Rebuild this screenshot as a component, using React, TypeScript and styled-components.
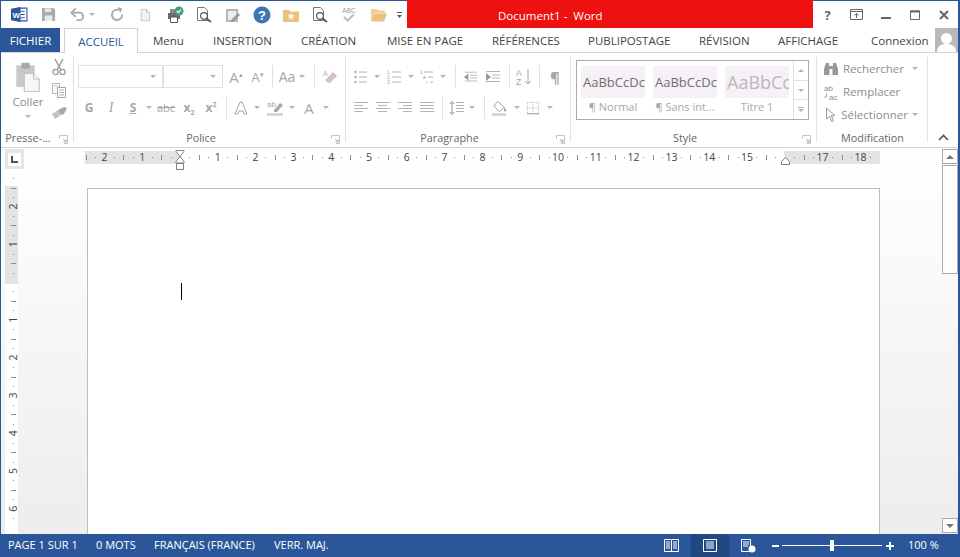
import React from 'react';
import styled, { createGlobalStyle } from 'styled-components';

const BLUE = '#2b579a';
const FAINT = '#b4b4b4';
const MID = '#a6a6a6';

const GlobalStyle = createGlobalStyle`
  html, body { margin: 0; padding: 0; background: #fff; }
  body { font-family: "Open Sans", "Noto Sans", "Liberation Sans", sans-serif; overflow: hidden; }
`;

const Win = styled.div`
  width: 960px;
  height: 557px;
  box-sizing: border-box;
  display: flex;
  flex-direction: column;
  border-left: 1px solid ${BLUE};
  border-right: 2px solid ${BLUE};
  overflow: hidden;
`;

/* title bar */
const TitleBar = styled.div`
  height: 28px;
  display: flex;
  flex: none;
`;
const Qat = styled.div`
  width: 406px;
  box-sizing: border-box;
  display: flex;
  align-items: center;
  padding-left: 6px;
  border-top: 1px solid ${BLUE};
`;
const QatBtn = styled.div<{ $w: number; $start?: boolean }>`
  width: ${(p) => p.$w}px;
  height: 20px;
  flex: none;
  display: flex;
  align-items: center;
  justify-content: ${(p) => (p.$start ? 'flex-start' : 'center')};
`;
const Title = styled.div`
  width: 406px;
  background: #ee1111;
  color: #fff;
  font-size: 11.5px;
  display: flex;
  align-items: center;
  justify-content: flex-start;
  padding-left: 91px;
  padding-top: 3px;
  box-sizing: border-box;
  white-space: pre;
`;
const WinBtns = styled.div`
  flex: 1;
  display: flex;
  align-items: center;
  border-top: 1px solid ${BLUE};
`;
const WinBtn = styled.div`
  width: 29px;
  height: 24px;
  display: flex;
  align-items: center;
  justify-content: center;
  color: #666;
  font-size: 13px;
  font-weight: 700;
`;

/* tabs */
const TabBar = styled.div`
  height: 25px;
  flex: none;
  display: flex;
  align-items: stretch;
  box-sizing: border-box;
  border-bottom: 1px solid #d4d4d4;
  font-size: 11.5px;
  color: #444;
`;
const FileTab = styled.div`
  width: 59px;
  background: ${BLUE};
  color: #fff;
  display: flex;
  align-items: center;
  justify-content: center;
`;
const ActiveTab = styled.div`
  width: 74px;
  margin-left: 4px;
  margin-bottom: -1px;
  background: #fff;
  color: ${BLUE};
  box-sizing: border-box;
  border: 1px solid #d4d4d4;
  border-bottom: none;
  display: flex;
  align-items: center;
  justify-content: center;
`;
const Tab = styled.div<{ $w: number }>`
  width: ${(p) => p.$w}px;
  flex: none;
  display: flex;
  align-items: center;
  white-space: nowrap;
`;
const TabList = styled.div`
  display: flex;
  margin-left: 15px;
`;
const Avatar = styled.div`
  width: 23px;
  margin-left: 7px;
  background: #b9b9b9;
  display: flex;
  align-items: flex-end;
  justify-content: center;
`;

/* ribbon */
const Ribbon = styled.div`
  height: 95px;
  flex: none;
  display: flex;
  box-sizing: border-box;
  border-bottom: 1px solid #d4d4d4;
  padding-bottom: 1px;
`;
const Group = styled.div<{ $w: number }>`
  width: ${(p) => p.$w}px;
  flex: none;
  display: flex;
  flex-direction: column;
  position: relative;
  &::after {
    content: '';
    position: absolute;
    right: 0;
    top: 4px;
    bottom: 4px;
    width: 1px;
    background: #e1e1e1;
  }
`;
const GroupBody = styled.div`
  height: 77px;
  flex: none;
  box-sizing: border-box;
`;
const GroupLabel = styled.div<{ $right?: number }>`
  flex: 1;
  font-size: 10.8px;
  color: #666;
  display: flex;
  align-items: center;
  justify-content: center;
  position: relative;
  box-sizing: border-box;
  padding-right: ${(p) => p.$right ?? 0}px;
  padding-bottom: 2px;
`;
const Launcher = styled.svg`
  position: absolute;
  right: 6px;
  top: 5px;
`;

const ClipBody = styled(GroupBody)`
  display: flex;
  padding: 3px 0 0 7px;
`;
const PasteCol = styled.div`
  width: 40px;
  padding-top: 6px;
  display: flex;
  flex-direction: column;
  align-items: center;
  font-size: 11.5px;
  color: #8c8c8c;
  gap: 2px;
`;
const PasteCaret = styled.div`
  margin-top: 4px;
`;
const ClipTools = styled.div`
  width: 20px;
  margin-left: 1px;
  padding-top: 1px;
  display: flex;
  flex-direction: column;
  gap: 3px;
`;
const Rows = styled(GroupBody)<{ $left: number }>`
  padding: 12px 0 0 ${(p) => p.$left}px;
  display: flex;
  flex-direction: column;
  gap: 8px;
`;
const Row = styled.div<{ $shift?: number }>`
  height: 23px;
  display: flex;
  align-items: center;
  margin-left: ${(p) => p.$shift ?? 0}px;
`;
const Field = styled.div<{ $w: number }>`
  width: ${(p) => p.$w}px;
  height: 23px;
  box-sizing: border-box;
  border: 1px solid #e1e1e1;
  display: flex;
  align-items: center;
  justify-content: flex-end;
  padding-right: 6px;
`;
const Tool = styled.div<{ $w: number }>`
  width: ${(p) => p.$w}px;
  height: 20px;
  flex: none;
  display: flex;
  align-items: center;
  justify-content: center;
  color: ${MID};
  font-size: 12px;
`;
const Glyph = styled.span<{ $bold?: boolean; $italic?: boolean; $under?: boolean; $size?: number; $strike?: boolean }>`
  font-size: ${(p) => p.$size ?? 12}px;
  font-weight: ${(p) => (p.$bold ? 700 : 400)};
  font-style: ${(p) => (p.$italic ? 'italic' : 'normal')};
  text-decoration: ${(p) => (p.$under ? 'underline' : p.$strike ? 'line-through' : 'none')};
  font-family: ${(p) => (p.$italic ? '"Liberation Serif", serif' : 'inherit')};
  sub, sup { font-size: 7px; line-height: 0; }
`;
const Caret = styled.span`
  display: block;
  width: 0;
  height: 0;
  border-left: 3px solid transparent;
  border-right: 3px solid transparent;
  border-top: 3px solid ${FAINT};
`;
const SepSlot = styled.div<{ $w: number }>`
  width: ${(p) => p.$w}px;
  height: 23px;
  flex: none;
  display: flex;
  justify-content: center;
  &::before {
    content: '';
    width: 1px;
    background: #e1e1e1;
  }
`;

/* styles gallery */
const StyleBody = styled(GroupBody)`
  padding: 7px 0 0 5px;
`;
const Gallery = styled.div`
  width: 233px;
  height: 60px;
  box-sizing: border-box;
  border: 1px solid #ababab;
  display: flex;
  padding: 5px 0 0 4px;
  position: relative;
`;
const StyleCell = styled.div`
  width: 64px;
  margin-right: 8px;
  display: flex;
  flex-direction: column;
  align-items: center;
`;
const Swatch = styled.div<{ $title?: boolean }>`
  width: 64px;
  height: 32px;
  background: #f5f1f6;
  overflow: hidden;
  display: flex;
  align-items: center;
  padding-left: 2px;
  box-sizing: border-box;
  white-space: nowrap;
  font-size: ${(p) => (p.$title ? 18 : 13)}px;
  color: ${(p) => (p.$title ? '#b9b9b9' : '#6e6e6e')};
`;
const StyleName = styled.div`
  font-size: 11px;
  color: #a8a8a8;
  margin-top: 1px;
  white-space: nowrap;
`;
const GalleryScroll = styled.div`
  position: absolute;
  right: 0;
  top: 0;
  bottom: 0;
  width: 14px;
  border-left: 1px solid #e1e1e1;
  display: flex;
  flex-direction: column;
`;
const ScrollCell = styled.div`
  flex: 1;
  display: flex;
  flex-direction: column;
  gap: 1px;
  align-items: center;
  justify-content: center;
  & + & { border-top: 1px solid #e1e1e1; }
`;
const CaretUp = styled(Caret)`
  border-top: none;
  border-bottom: 3px solid ${FAINT};
`;
const Bar = styled.span`
  display: block;
  width: 6px;
  height: 1px;
  background: ${FAINT};
`;

/* modification */
const FindBody = styled(GroupBody)`
  padding: 4px 0 0 6px;
  display: flex;
  flex-direction: column;
`;
const FindRow = styled.div`
  height: 23px;
  width: 95px;
  display: flex;
  align-items: center;
  gap: 4px;
  font-size: 11.5px;
  color: #8e8e8e;
`;
const FindIcon = styled.div`
  width: 16px;
  display: flex;
  justify-content: center;
`;
const FindCaret = styled(Caret)`
  margin-left: auto;
`;
const Collapse = styled.div`
  flex: 1;
  display: flex;
  align-items: flex-end;
  justify-content: center;
  padding: 0 0 5px 0;
`;

/* workspace */
const Workspace = styled.div`
  flex: 1;
  min-height: 0;
  display: flex;
  background: linear-gradient(#ffffff, #ededed);
`;
const DocPane = styled.div`
  flex: 1;
  min-width: 0;
  display: flex;
  flex-direction: column;
`;
const RulerRow = styled.div`
  height: 22px;
  flex: none;
  display: flex;
  align-items: stretch;
  padding-left: 4px;
`;
const TabStop = styled.div`
  width: 19px;
  margin: 1px 0;
  background: #e6e6e6;
  display: flex;
  align-items: center;
  justify-content: center;
`;
const TabStopInner = styled.div`
  width: 13px;
  height: 13px;
  background: #fff;
  display: flex;
  align-items: center;
  justify-content: center;
`;
const HRuler = styled.svg`
  margin-left: 61px;
  display: block;
`;
const DocRow = styled.div`
  flex: 1;
  min-height: 0;
  display: flex;
  padding-left: 4px;
`;
const VRuler = styled.svg`
  margin-top: 16px;
  display: block;
  flex: none;
  overflow: visible;
`;
const Page = styled.div`
  width: 793px;
  margin: 18px 0 0 69px;
  box-sizing: border-box;
  background: #fff;
  border: 1px solid #bdbdbd;
  border-bottom: none;
  padding: 94px 0 0 93px;
`;
const TextCaret = styled.div`
  width: 1px;
  height: 17px;
  background: #000;
`;
const Scrollbar = styled.div`
  width: 16px;
  flex: none;
  padding: 1px 0 1px;
  display: flex;
  flex-direction: column;
  gap: 1px;
`;
const ScrollBtn = styled.div`
  height: 15px;
  flex: none;
  box-sizing: border-box;
  border: 1px solid #ababab;
  background: #fff;
  display: flex;
  align-items: center;
  justify-content: center;
`;
const Track = styled.div`
  flex: 1;
  min-height: 0;
`;
const Thumb = styled.div`
  height: 109px;
  box-sizing: border-box;
  border: 1px solid #ababab;
  background: #fff;
`;
const ArrowUp = styled.span`
  width: 0;
  height: 0;
  border-left: 4px solid transparent;
  border-right: 4px solid transparent;
  border-bottom: 4px solid #777;
`;
const ArrowDown = styled.span`
  width: 0;
  height: 0;
  border-left: 4px solid transparent;
  border-right: 4px solid transparent;
  border-top: 4px solid #777;
`;

/* status bar */
const StatusBar = styled.div`
  height: 23px;
  flex: none;
  background: ${BLUE};
  color: #fff;
  font-size: 11px;
  display: flex;
  align-items: center;
  margin-left: -1px;
  margin-right: -2px;
`;
const StatusText = styled.div<{ $w: number }>`
  width: ${(p) => p.$w}px;
  flex: none;
  white-space: nowrap;
  padding-bottom: 2px;
`;
const StatusLeft = styled.div`
  display: flex;
  align-items: center;
  justify-content: flex-start;
  padding-left: 8px;
  width: 691px;
  box-sizing: border-box;
`;
const ViewBtn = styled.div<{ $active?: boolean; $w: number }>`
  width: ${(p) => p.$w}px;
  height: 23px;
  background: ${(p) => (p.$active ? '#204883' : 'transparent')};
  display: flex;
  align-items: center;
  justify-content: center;
  flex: none;
`;
const ReadBtn = styled(ViewBtn)`
  margin-left: auto;
  padding-right: 2px;
  box-sizing: border-box;
`;
const Zoom = styled.div`
  display: flex;
  align-items: center;
  margin-left: 5px;
`;
const ZoomSign = styled.span`
  width: 7px;
  height: 2px;
  background: #fff;
  display: block;
  position: relative;
`;
const ZoomPlus = styled(ZoomSign)`
  width: 8px;
  &::after {
    content: '';
    position: absolute;
    left: 3px;
    top: -3px;
    width: 2px;
    height: 8px;
    background: #fff;
  }
`;
const Slider = styled.div`
  width: 100px;
  height: 1px;
  background: #fff;
  margin: 0 4px 0 3px;
  position: relative;
`;
const SliderKnob = styled.span`
  position: absolute;
  left: 48px;
  top: -5px;
  width: 4px;
  height: 11px;
  background: #fff;
`;
const ZoomValue = styled.div`
  margin-left: 14px;
  font-size: 11px;
  white-space: nowrap;
  padding-bottom: 2px;
`;

/* icons */
type IconProps = { w?: number; h?: number; children: React.ReactNode; box?: string };
const Ico = ({ w = 16, h = 16, box = '0 0 16 16', children }: IconProps) => (
  <svg width={w} height={h} viewBox={box} fill="none">
    {children}
  </svg>
);
const lines = (rows: number[][], color = FAINT) =>
  rows.map(([x1, y, x2], i) => <path key={i} d={`M${x1} ${y + 0.5}H${x2}`} stroke={color} />);

const WordLogo = () => (
  <Ico w={17} h={17}>
    <path d="M7 2h8v12H7z" fill="#fff" stroke="#2b579a" />
    <path d="M9 5h4M9 8h4M9 11h4" stroke="#2b579a" />
    <path d="M0 2.5 9 1v14L0 13.5z" fill="#2b579a" />
    <text x="1.5" y="11" fontSize="7.5" fontWeight="700" fill="#fff" fontFamily="Liberation Sans">W</text>
  </Ico>
);
const SaveIcon = () => (
  <Ico w={15} h={15}>
    <path d="M1 1h12l2 2v12H1z" fill="#a9a9a9" />
    <path d="M4 1.5h7v4H4z" fill="#e6e6e6" />
    <path d="M4 9h8v6H4z" fill="#e9e9e9" />
  </Ico>
);
const UndoIcon = () => (
  <Ico w={15} h={15}>
    <path d="M2 6h8a3.6 3.6 0 0 1 0 8H7" stroke="#a9a9a9" strokeWidth="2" />
    <path d="M6 1.5 1.5 6 6 10.5" stroke="#a9a9a9" strokeWidth="2" />
  </Ico>
);
const RedoIcon = () => (
  <Ico w={15} h={15}>
    <path d="M9.5 3.2A5.5 5.5 0 1 0 13 8" stroke="#a9a9a9" strokeWidth="2" />
    <path d="M8 0l5 1.5-2 5z" fill="#a9a9a9" />
  </Ico>
);
const NewDoc = () => (
  <Ico w={14} h={16}>
    <path d="M2.5 1.5h6l3.5 3.5v9.5H2.5z" fill="#f2f2f2" stroke="#c4c4c4" />
    <path d="M8.5 1.5V5H12" stroke="#c4c4c4" />
  </Ico>
);
const PrintCheck = () => (
  <Ico w={18} h={18} box="0 0 18 18">
    <path d="M2 7h12v6H2z" fill="#6b6b6b" />
    <path d="M4 3h7v4H4z" fill="#8a8a8a" />
    <path d="M4.5 11h7v5.5h-7z" fill="#fff" stroke="#555" />
    <circle cx="13" cy="5" r="4.5" fill="#3f9e84" />
    <path d="M10.8 5l1.6 1.6 2.6-3" stroke="#fff" strokeWidth="1.2" />
  </Ico>
);
const Preview = () => (
  <Ico w={16} h={17} box="0 0 16 17">
    <path d="M1.5 1.5h7l3 3v10h-10z" fill="#fff" stroke="#777" />
    <circle cx="8" cy="10" r="3.4" fill="#fff" stroke="#555" strokeWidth="1.2" />
    <path d="M10.5 12.5 15 16" stroke="#555" strokeWidth="1.8" />
  </Ico>
);
const EditDoc = () => (
  <Ico w={16} h={16}>
    <path d="M1 2h12v13H1z" fill="#b7b7b7" />
    <path d="M3 4h8v9H3z" fill="#eee" />
    <path d="M6 13l7-7 2 2-7 7H6z" fill="#999" />
  </Ico>
);
const HelpIcon = () => (
  <Ico w={18} h={18} box="0 0 18 18">
    <circle cx="9" cy="9" r="8.5" fill="#3a78b5" />
    <text x="9" y="14" textAnchor="middle" fontSize="13" fontWeight="700" fill="#fff" fontFamily="Liberation Sans">?</text>
  </Ico>
);
const FolderStar = () => (
  <Ico w={16} h={14} box="0 0 16 14">
    <path d="M0 2h6l1 1.5h9V14H0z" fill="#eec07e" />
    <path d="M8 5l1 2.2 2.4.2-1.8 1.6.6 2.4L8 10.1l-2.2 1.3.6-2.4-1.8-1.6L7 7.2z" fill="#fff" />
  </Ico>
);
const SpellIcon = () => (
  <Ico w={16} h={17} box="0 0 16 17">
    <text x="8" y="6.5" textAnchor="middle" fontSize="6.5" fill="#999" fontFamily="Liberation Sans">ABC</text>
    <path d="M3 11l3.5 3.5L13 8.5" stroke="#bdbdbd" strokeWidth="2.2" />
  </Ico>
);
const FolderOpen = () => (
  <Ico w={17} h={14} box="0 0 17 14">
    <path d="M1 1h6l1.5 1.5H15V5H4L1 13z" fill="#f0cf9a" />
    <path d="M4 5.5h13L14 13.5H1z" fill="#eec07e" />
  </Ico>
);
const Customize = () => (
  <Ico w={7} h={8} box="0 0 7 8">
    <path d="M1 1.5h5" stroke="#555" />
    <path d="M1 4h5L3.5 7z" fill="#555" />
  </Ico>
);
const PasteIcon = () => (
  <Ico w={30} h={30} box="0 0 30 36">
    <path d="M1 4h22v26H1z" fill="#c9c9c9" />
    <path d="M7 1h10v7H7z" fill="#a9a9a9" />
    <path d="M10.5 13.5h11l7 7v15h-18z" fill="#f7f7f7" stroke="#b5b5b5" />
    <path d="M21.5 13.5v7h7" stroke="#b5b5b5" />
  </Ico>
);
const CutIcon = () => (
  <Ico w={16} h={18} box="0 0 16 18">
    <path d="M4 1l6 11M12 1 6 12" stroke="#9a9a9a" strokeWidth="1.4" />
    <circle cx="4.5" cy="14" r="2.6" stroke="#9a9a9a" strokeWidth="1.2" />
    <circle cx="11.5" cy="14" r="2.6" stroke="#9a9a9a" strokeWidth="1.2" />
  </Ico>
);
const CopyIcon = () => (
  <Ico w={16} h={16}>
    <path d="M1.5 1.5h7v10h-7z" fill="#fff" stroke="#b5b5b5" />
    <path d="M6.5 5.5h8v10h-8z" fill="#fff" stroke="#a5a5a5" />
    <path d="M8 8h5M8 10.5h5M8 13h5M3 4h4" stroke="#b5b5b5" />
  </Ico>
);
const BrushIcon = () => (
  <Ico w={17} h={14} box="0 0 17 14">
    <path d="M1 8l6-4 3 5-6 4z" fill="#c4c4c4" />
    <path d="M7 4l6-3 3 1-3 6-3 1z" fill="#a8a8a8" />
  </Ico>
);
const Eraser = () => (
  <Ico w={16} h={16}>
    <text x="1" y="7" fontSize="7" fill="#b5b5b5" fontFamily="Liberation Sans">A</text>
    <path d="M3 11l6-6 4 4-5 5H6z" fill="#c9c9c9" />
    <path d="M9 5l2-2 4 4-2 2z" fill="#e0b8a8" />
  </Ico>
);
const ListBullets = () => (
  <Ico>
    <circle cx="2.5" cy="3" r="1.3" fill={FAINT} />
    <circle cx="2.5" cy="8" r="1.3" fill={FAINT} />
    <circle cx="2.5" cy="13" r="1.3" fill={FAINT} />
    {lines([[6, 2.5, 14], [6, 7.5, 14], [6, 12.5, 14]])}
  </Ico>
);
const ListNumbers = () => (
  <Ico>
    <text x="0" y="5" fontSize="5" fill={MID} fontFamily="Liberation Sans">1</text>
    <text x="0" y="10" fontSize="5" fill={MID} fontFamily="Liberation Sans">2</text>
    <text x="0" y="15" fontSize="5" fill={MID} fontFamily="Liberation Sans">3</text>
    {lines([[5, 2.5, 14], [5, 7.5, 14], [5, 12.5, 14]])}
  </Ico>
);
const ListMulti = () => (
  <Ico>
    <text x="0" y="5" fontSize="5" fill={MID} fontFamily="Liberation Sans">1</text>
    <text x="3" y="10" fontSize="5" fill={MID} fontFamily="Liberation Sans">a</text>
    <text x="6" y="15" fontSize="5" fill={MID} fontFamily="Liberation Sans">i</text>
    {lines([[4, 2.5, 13], [8, 7.5, 13], [10, 12.5, 13]])}
  </Ico>
);
const Indent = ({ out }: { out?: boolean }) => (
  <Ico>
    {lines([[1, 2, 15], [7, 5.5, 15], [7, 8.5, 15], [1, 12, 15]])}
    {out ? <path d="M5 4v8L0 8z" fill="#999" /> : <path d="M1 4v8l5-4z" fill="#999" />}
  </Ico>
);
const SortIcon = () => (
  <Ico w={17} h={18} box="0 0 17 18">
    <text x="0" y="8" fontSize="8.5" fill={MID} fontFamily="Liberation Sans">A</text>
    <text x="0" y="17" fontSize="8.5" fill={MID} fontFamily="Liberation Sans">Z</text>
    <path d="M12 1v15M9 13l3 3 3-3" stroke={MID} />
  </Ico>
);
const Align = ({ kind }: { kind: 'left' | 'center' | 'right' | 'justify' }) => {
  const short = { left: [1, 10], center: [3, 12], right: [6, 15], justify: [1, 15] }[kind];
  return (
    <Ico>
      {lines([[1, 2, 15], [short[0], 5, short[1]], [1, 8, 15], [short[0], 11, short[1]]])}
    </Ico>
  );
};
const LineSpacing = () => (
  <Ico>
    <path d="M3 2v12M1 4l2-2.5L5 4M1 12l2 2.5L5 12" stroke="#999" />
    {lines([[7, 2, 15], [7, 5, 15], [7, 8, 15], [7, 11, 15]])}
  </Ico>
);
const ShadeIcon = () => (
  <Ico w={17} h={18} box="0 0 17 18">
    <path d="M6 2l7 6-5 5-6-6z" fill="#fff" stroke="#9a9a9a" />
    <path d="M13 8c1 2 2 3 2 4s-2 1-2 0z" fill="#888" />
    <path d="M0 14.5h15v3H0z" fill="#d5d5d5" />
  </Ico>
);
const BorderIcon = () => (
  <Ico>
    <path d="M1.5 1.5h13v13h-13zM1.5 8h13M8 1.5v13" stroke="#b5b5b5" strokeDasharray="1 1" />
    <path d="M1 14.5h14" stroke="#999" />
  </Ico>
);
const Binoculars = () => (
  <Ico w={16} h={14} box="0 0 16 14">
    <path d="M3 1h3v3h4V1h3l2 6v6H9.5V7h-3v6H1V7z" fill="#999" />
  </Ico>
);
const ReplaceIcon = () => (
  <Ico w={16} h={16}>
    <text x="1" y="6.5" fontSize="8" fill="#8e8e8e" fontFamily="Liberation Sans">ab</text>
    <text x="6" y="15.5" fontSize="8" fill="#8e8e8e" fontFamily="Liberation Sans">ac</text>
    <path d="M3.5 9v4H1" stroke="#aaa" />
  </Ico>
);
const CursorIcon = () => (
  <Ico w={13} h={16} box="0 0 13 16">
    <path d="M2.5 1v11l3-2.5 2.2 5 1.8-.8-2.2-5h3.7z" fill="#fff" stroke="#999" />
  </Ico>
);
const ReadIcon = () => (
  <Ico w={15} h={14} box="0 0 15 14">
    <path d="M.5.5H7l.5.5.5-.5h6.500v12H8l-.5.5-.5-.5H.5z" stroke="#fff" />
    <path d="M7.5 1v12M2 3h4M2 5h4M2 7h4M2 9h4M9 3h4M9 5h4M9 7h4M9 9h4" stroke="#fff" />
  </Ico>
);

const LauncherIcon = () => (
  <Launcher width="9" height="9" viewBox="0 0 9 9" fill="none">
    <path d="M.5 4V.5H8.5V8.5H5" stroke="#c4c4c4" />
    <path d="M4 4l3 3M7 4.5V7H4.5" stroke="#aaa" />
  </Launcher>
);

/* rulers */
const STEP = 37.8;
const H_ZERO = 95;
const hNumbers = [-2, -1, 1, 2, 3, 4, 5, 6, 7, 8, 9, 10, 11, 12, 13, 14, 15, 17, 18];
const hTicks = Array.from({ length: 84 }, (_, i) => i - 10).filter((q) => q % 4 !== 0);
const rulerFont = 'Open Sans, Liberation Sans, sans-serif';

const HorizontalRuler = () => (
  <HRuler width="795" height="22" viewBox="0 0 795 22" fill="none">
    <rect x="0" y="3" width="795" height="13" fill="#e3e3e3" />
    <rect x="95" y="3" width="604" height="13" fill="#fff" />
    {hTicks.map((q) => {
      const x = Math.round(H_ZERO + (q * STEP) / 4);
      return q % 2 === 0 ? (
        <path key={q} d={`M${x + 0.5} 7v5`} stroke="#8c8c8c" />
      ) : (
        <path key={q} d={`M${x + 0.5} 9v1`} stroke="#8c8c8c" />
      );
    })}
    {hNumbers.map((n) => (
      <text key={n} x={H_ZERO + n * STEP} y="13" textAnchor="middle" fontSize="10.5" fill="#444" fontFamily={rulerFont}>
        {Math.abs(n)}
      </text>
    ))}
    <path d="M91 2.5h8v1l-4 5-4-5z" fill="#fff" stroke="#808080" />
    <path d="M95 8.5l4 5V15h-8v-1.5z" fill="#fff" stroke="#808080" />
    <path d="M91.5 15.5h7v6h-7z" fill="#fff" stroke="#808080" />
    <path d="M700.5 9.5l4 4v3h-8v-3z" fill="#fff" stroke="#808080" />
  </HRuler>
);

const V_ZERO = 96;
const vNumbers = [-2, -1, 1, 2, 3, 4, 5, 6];
const vTicks = Array.from({ length: 37 }, (_, i) => i - 11).filter((q) => q % 4 !== 0);

const VerticalRuler = () => (
  <VRuler width="13" height="348" viewBox="0 0 13 348" fill="none">
    <rect width="13" height="98" fill="#e3e3e3" />
    <rect y="98" width="13" height="250" fill="#fff" />
    {vTicks.map((q) => {
      const y = Math.round(V_ZERO + (q * STEP) / 4);
      return q % 2 === 0 ? (
        <path key={q} d={`M6 ${y + 0.5}h5`} stroke="#8c8c8c" />
      ) : (
        <path key={q} d={`M8 ${y + 0.5}h1`} stroke="#8c8c8c" />
      );
    })}
    {vNumbers.map((n) => {
      const y = V_ZERO + n * STEP;
      return (
        <text key={n} x="12" y={y} textAnchor="middle" fontSize="10.5" fill="#444" fontFamily={rulerFont} transform={`rotate(-90 12 ${y})`}>
          {Math.abs(n)}
        </text>
      );
    })}
  </VRuler>
);

const TABS: [string, number][] = [
  ['Menu', 60],
  ['INSERTION', 88],
  ['CRÉATION', 86],
  ['MISE EN PAGE', 105],
  ['RÉFÉRENCES', 96],
  ['PUBLIPOSTAGE', 111],
  ['RÉVISION', 79],
  ['AFFICHAGE', 93],
  ['Connexion', 57],
];

export default function App() {
  return (
    <>
      <GlobalStyle />
      <Win>
        <TitleBar>
          <Qat>
            <QatBtn $w={24}><WordLogo /></QatBtn>
            <QatBtn $w={34}><SaveIcon /></QatBtn>
            <QatBtn $w={24}><UndoIcon /></QatBtn>
            <QatBtn $w={13.5} $start><Caret /></QatBtn>
            <QatBtn $w={29}><RedoIcon /></QatBtn>
            <QatBtn $w={29}><NewDoc /></QatBtn>
            <QatBtn $w={29}><PrintCheck /></QatBtn>
            <QatBtn $w={29}><Preview /></QatBtn>
            <QatBtn $w={29}><EditDoc /></QatBtn>
            <QatBtn $w={29}><HelpIcon /></QatBtn>
            <QatBtn $w={29}><FolderStar /></QatBtn>
            <QatBtn $w={29}><Preview /></QatBtn>
            <QatBtn $w={29}><SpellIcon /></QatBtn>
            <QatBtn $w={29}><FolderOpen /></QatBtn>
            <QatBtn $w={14}><Customize /></QatBtn>
          </Qat>
          <Title>Document1 -  Word</Title>
          <WinBtns>
            <WinBtn>?</WinBtn>
            <WinBtn>
              <svg width="13" height="11" viewBox="0 0 13 11" fill="none">
                <path d="M.5.5h12v10H.5zM.5 2.5h12" stroke="#666" />
                <path d="M6.5 9V4.5M4.5 6.5l2-2 2 2" stroke="#666" />
              </svg>
            </WinBtn>
            <WinBtn>
              <svg width="10" height="10" viewBox="0 0 10 10"><path d="M0 7h10v2H0z" fill="#666" /></svg>
            </WinBtn>
            <WinBtn>
              <svg width="10" height="10" viewBox="0 0 10 10" fill="none"><path d="M.5 1h9v8.5H.5z" stroke="#666" /><path d="M0 .5h10v2H0z" fill="#666" /></svg>
            </WinBtn>
            <WinBtn>
              <svg width="10" height="10" viewBox="0 0 10 10" fill="none"><path d="M1 1l8 8M9 1 1 9" stroke="#666" strokeWidth="2" /></svg>
            </WinBtn>
          </WinBtns>
        </TitleBar>

        <TabBar>
          <FileTab>FICHIER</FileTab>
          <ActiveTab>ACCUEIL</ActiveTab>
          <TabList>
            {TABS.map(([label, w]) => (
              <Tab key={label} $w={w}>{label}</Tab>
            ))}
          </TabList>
          <Avatar>
            <svg width="19" height="20" viewBox="0 0 19 20">
              <circle cx="9.5" cy="6.5" r="5.5" fill="#fff" />
              <path d="M0 20c0-6 4-8 9.5-8S19 14 19 20z" fill="#fff" />
            </svg>
          </Avatar>
        </TabBar>

        <Ribbon>
          <Group $w={73}>
            <ClipBody>
              <PasteCol>
                <PasteIcon />
                <span>Coller</span>
                <PasteCaret><Caret /></PasteCaret>
              </PasteCol>
              <ClipTools>
                <Tool $w={20}><CutIcon /></Tool>
                <Tool $w={20}><CopyIcon /></Tool>
                <Tool $w={20}><BrushIcon /></Tool>
              </ClipTools>
            </ClipBody>
            <GroupLabel $right={19}>
              Presse-...
              <LauncherIcon />
            </GroupLabel>
          </Group>

          <Group $w={272}>
            <Rows $left={4}>
              <Row>
                <Field $w={85}><Caret /></Field>
                <Field $w={60}><Caret /></Field>
                <Tool $w={26}><Glyph $size={15}>A<sup>▴</sup></Glyph></Tool>
                <Tool $w={17}><Glyph $size={13}>A<sup>▾</sup></Glyph></Tool>
                <SepSlot $w={12} />
                <Tool $w={18}><Glyph $size={14}>Aa</Glyph></Tool>
                <Tool $w={12}><Caret /></Tool>
                <SepSlot $w={12} />
                <Tool $w={20}><Eraser /></Tool>
              </Row>
              <Row>
                <Tool $w={22}><Glyph $bold>G</Glyph></Tool>
                <Tool $w={22}><Glyph $italic $size={14}>I</Glyph></Tool>
                <Tool $w={22}><Glyph $bold $under>S</Glyph></Tool>
                <Tool $w={10}><Caret /></Tool>
                <Tool $w={24}><Glyph $size={11} $strike>abc</Glyph></Tool>
                <Tool $w={22}><Glyph $bold>x<sub>2</sub></Glyph></Tool>
                <Tool $w={22}><Glyph $bold>x<sup>2</sup></Glyph></Tool>
                <SepSlot $w={8} />
                <Tool $w={22}>
                  <svg width="16" height="16" viewBox="0 0 16 16" fill="none">
                    <path d="M2 14 7 2h2l5 12h-3l-1-3H6l-1 3z" fill="#fff" stroke={MID} />
                  </svg>
                </Tool>
                <Tool $w={10}><Caret /></Tool>
                <Tool $w={26}>
                  <svg width="17" height="16" viewBox="0 0 17 16" fill="none">
                    <text x="0" y="7" fontSize="8" fill={MID} fontFamily="Liberation Sans">ab</text>
                    <path d="M7 10l6-7 3 2-6 7H7z" fill="#a9a9a9" />
                    <path d="M0 13h16v3H0z" fill="#d8d8d8" />
                  </svg>
                </Tool>
                <Tool $w={8}><Caret /></Tool>
                <Tool $w={26}><Glyph $size={15}>A</Glyph></Tool>
                <Tool $w={8}><Caret /></Tool>
              </Row>
            </Rows>
            <GroupLabel $right={18}>Police<LauncherIcon /></GroupLabel>
          </Group>

          <Group $w={225}>
            <Rows $left={6}>
              <Row>
                <Tool $w={18}><ListBullets /></Tool>
                <Tool $w={14}><Caret /></Tool>
                <Tool $w={22}><ListNumbers /></Tool>
                <Tool $w={10}><Caret /></Tool>
                <Tool $w={24}><ListMulti /></Tool>
                <Tool $w={6}><Caret /></Tool>
                <SepSlot $w={18} />
                <Tool $w={14}><Indent out /></Tool>
                <Tool $w={30}><Indent /></Tool>
                <SepSlot $w={2} />
                <Tool $w={28}><SortIcon /></Tool>
                <SepSlot $w={2} />
                <Tool $w={30}><Glyph $bold $size={15}>¶</Glyph></Tool>
              </Row>
              <Row $shift={-2}>
                <Tool $w={22}><Align kind="left" /></Tool>
                <Tool $w={22}><Align kind="center" /></Tool>
                <Tool $w={22}><Align kind="right" /></Tool>
                <Tool $w={22}><Align kind="justify" /></Tool>
                <SepSlot $w={8} />
                <Tool $w={22}><LineSpacing /></Tool>
                <Tool $w={8}><Caret /></Tool>
                <SepSlot $w={16} />
                <Tool $w={16}><ShadeIcon /></Tool>
                <Tool $w={18}><Caret /></Tool>
                <Tool $w={14}><BorderIcon /></Tool>
                <Tool $w={20}><Caret /></Tool>
              </Row>
            </Rows>
            <GroupLabel $right={18}>Paragraphe<LauncherIcon /></GroupLabel>
          </Group>

          <Group $w={246}>
            <StyleBody>
              <Gallery>
                <StyleCell>
                  <Swatch>AaBbCcDc</Swatch>
                  <StyleName>¶ Normal</StyleName>
                </StyleCell>
                <StyleCell>
                  <Swatch>AaBbCcDc</Swatch>
                  <StyleName>¶ Sans int...</StyleName>
                </StyleCell>
                <StyleCell>
                  <Swatch $title>AaBbCc</Swatch>
                  <StyleName>Titre 1</StyleName>
                </StyleCell>
                <GalleryScroll>
                  <ScrollCell><CaretUp /></ScrollCell>
                  <ScrollCell><Caret /></ScrollCell>
                  <ScrollCell><Bar /><Caret /></ScrollCell>
                </GalleryScroll>
              </Gallery>
            </StyleBody>
            <GroupLabel $right={18}>Style<LauncherIcon /></GroupLabel>
          </Group>

          <Group $w={111}>
            <FindBody>
              <FindRow>
                <FindIcon><Binoculars /></FindIcon>
                <span>Rechercher</span>
                <FindCaret />
              </FindRow>
              <FindRow>
                <FindIcon><ReplaceIcon /></FindIcon>
                <span>Remplacer</span>
              </FindRow>
              <FindRow>
                <FindIcon><CursorIcon /></FindIcon>
                <span>Sélectionner</span>
                <FindCaret />
              </FindRow>
            </FindBody>
            <GroupLabel>Modification</GroupLabel>
          </Group>

          <Collapse>
            <svg width="11" height="7" viewBox="0 0 11 7" fill="none">
              <path d="M1 6l4.5-4.5L10 6" stroke="#555" strokeWidth="1.6" />
            </svg>
          </Collapse>
        </Ribbon>

        <Workspace>
          <DocPane>
            <RulerRow>
              <TabStop>
                <TabStopInner>
                  <svg width="7" height="7" viewBox="0 0 7 7"><path d="M0 0h2v5h5v2H0z" fill="#555" /></svg>
                </TabStopInner>
              </TabStop>
              <HorizontalRuler />
            </RulerRow>
            <DocRow>
              <VerticalRuler />
              <Page>
                <TextCaret />
              </Page>
            </DocRow>
          </DocPane>
          <Scrollbar>
            <ScrollBtn><ArrowUp /></ScrollBtn>
            <Track><Thumb /></Track>
            <ScrollBtn><ArrowDown /></ScrollBtn>
          </Scrollbar>
        </Workspace>

        <StatusBar>
          <StatusLeft>
            <StatusText $w={88}>PAGE 1 SUR 1</StatusText>
            <StatusText $w={58}>0 MOTS</StatusText>
            <StatusText $w={120}>FRANÇAIS (FRANCE)</StatusText>
            <StatusText $w={100}>VERR. MAJ.</StatusText>
            <ReadBtn $w={38}><ReadIcon /></ReadBtn>
          </StatusLeft>
          <ViewBtn $active $w={38}>
            <svg width="14" height="13" viewBox="0 0 14 13" fill="none">
              <path d="M.5.5h13v12H.5z" stroke="#fff" />
              <path d="M3 3h8M3 5h8M3 7h8M3 9h8" stroke="#fff" />
            </svg>
          </ViewBtn>
          <ViewBtn $w={38}>
            <svg width="15" height="14" viewBox="0 0 15 14" fill="none">
              <path d="M.5.5h9v12h-9z" stroke="#fff" />
              <path d="M2 3h6M2 5h6M2 7h5" stroke="#fff" />
              <circle cx="11" cy="10" r="3.5" fill="#fff" />
            </svg>
          </ViewBtn>
          <Zoom>
            <ZoomSign />
            <Slider><SliderKnob /></Slider>
            <ZoomPlus />
            <ZoomValue>100 %</ZoomValue>
          </Zoom>
        </StatusBar>
      </Win>
    </>
  );
}
